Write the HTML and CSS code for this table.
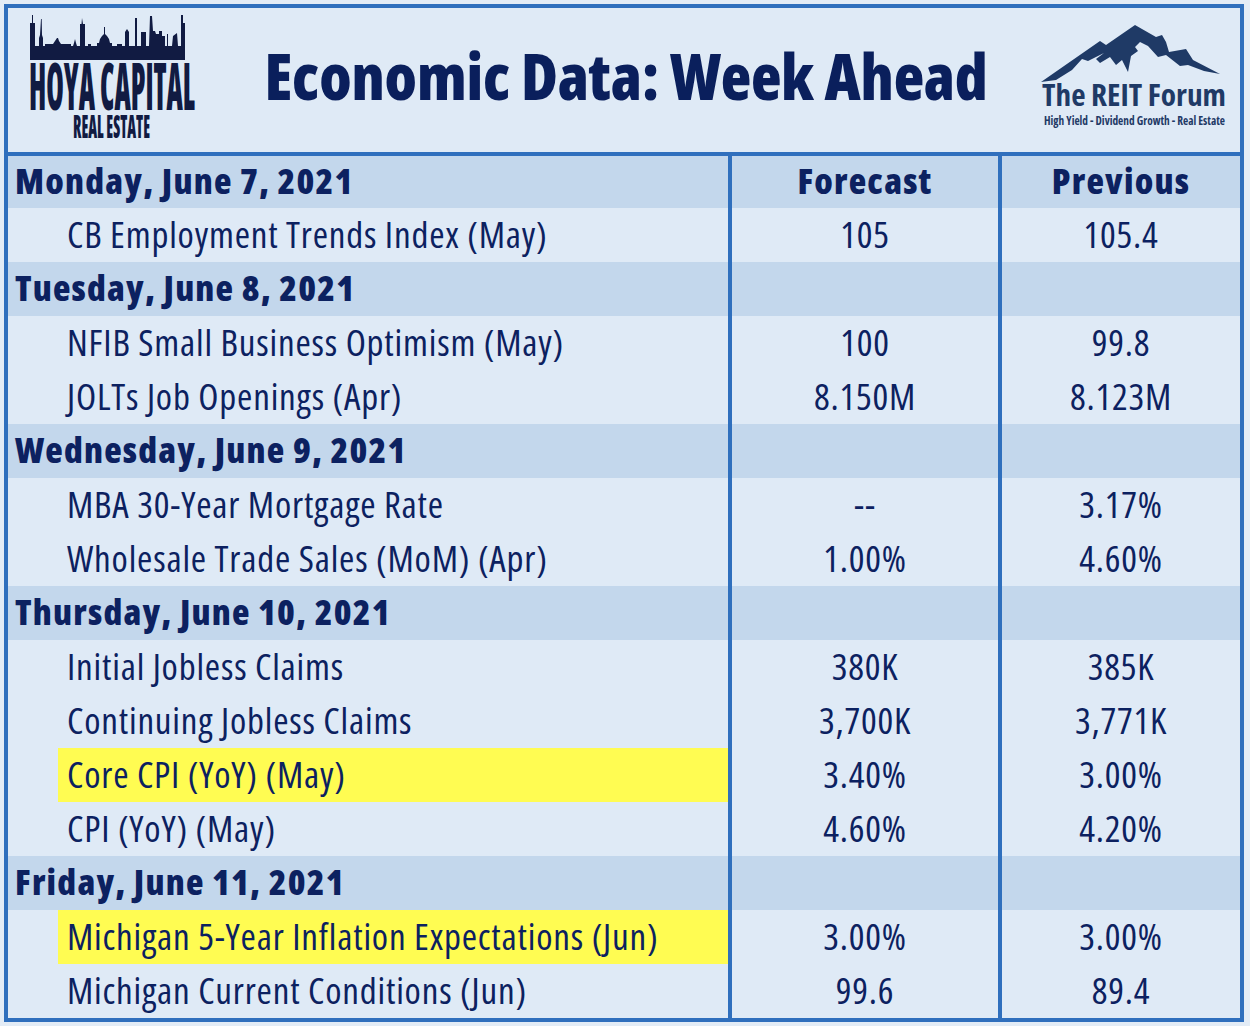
FILE: index.html
```html
<!DOCTYPE html>
<html lang="en">
<head>
<meta charset="utf-8">
<title>Economic Data: Week Ahead</title>
<link rel="stylesheet" href="styles.css">
</head>
<body>
<div class="frame">
  <header class="top">
    <div class="logo-left">
      <svg class="hoya" width="180" height="136" viewBox="0 0 180 136" aria-label="Hoya Capital Real Estate">
        <g transform="translate(5,4)" fill="#111b42">
          <path d="M5,48 L5,11 L7,11 L7,3 L8,3 L8,11 L10,11 L10,34 L14,34 L14,26 L15,23 L16,7 L16.7,7 L17,23 L18,26 L18,34 L20,34 L20,32 L28,32 L30,29 L32,26 L33,26 L34,29 L36,32 L46,32 L46,34 L48,34 L49,31 L50,27 L51,31 L52,34 L55,34 L55,12 L56.5,12 L57,6 L58,12 L60,12 L60,34 L63,34 L63,32 L66,32 L66,34 L72,34 L72,31 L74,31 L75,27 L77,24 L79,22 L79,15 L80,15 L80,22 L82,24 L84,27 L85,31 L87,31 L87,34 L92,34 L92,32 L97,32 L97,34 L100,34 L100,20 L102,17 L104,20 L104,34 L110,34 L110,6 L112,6 L112,34 L116,34 L116,20 L121,20 L121,34 L124,34 L125,4 L127,4 L128,19 L130,19 L131,22 L134,22 L134,19 L137,19 L137,24 L140,24 L140,34 L142,34 L142,22 L143,22 L143,34 L147,34 L148,24 L152,21 L153,34 L156,34 L156,3 L158,3 L158,11 L160,11 L160,48 Z"/>
          <rect x="5" y="40" width="155" height="8"/>
        </g>
        <g class="logo-text hoya-text">
          <text x="9" y="102" font-size="66" textLength="166" lengthAdjust="spacingAndGlyphs">HOYA CAPITAL</text>
          <text x="53" y="130" font-size="32" textLength="77" lengthAdjust="spacingAndGlyphs">REAL ESTATE</text>
        </g>
      </svg>
    </div>
    <h1 class="title">Economic Data: Week Ahead</h1>
    <div class="logo-right">
      <svg class="reit" width="200" height="136" viewBox="0 0 200 136" aria-label="The REIT Forum">
        <g transform="translate(3,12)" fill="#1f3a66">
          <path d="M3,62 L62,21 L68,25 L97,5 L118,17 L124,15 L128,22 L131,32 L148,29 L155,40 L182,54 L166,51 L150,45 L142,46 L128,35 L120,37 L110,26 L102,22 L97,27 L100,31 L93,36 L90,52 L84,40 L78,45 L72,37 L62,43 L58,39 L66,33 L50,41 L44,39 L34,50 L18,60 Z"/>
        </g>
        <g class="logo-text reit-text">
          <text x="7" y="98" font-size="30" textLength="184" lengthAdjust="spacingAndGlyphs">The REIT Forum</text>
          <text x="9" y="117" font-size="12" textLength="181" lengthAdjust="spacingAndGlyphs">High Yield - Dividend Growth - Real Estate</text>
        </g>
      </svg>
    </div>
  </header>

  <div class="table">
    <div class="row day first"><div class="c1">Monday, June 7, 2021</div><div class="c2">Forecast</div><div class="c3">Previous</div></div>
    <div class="row item"><div class="c1"><span>CB Employment Trends Index (May)</span></div><div class="c2">105</div><div class="c3">105.4</div></div>

    <div class="row day"><div class="c1">Tuesday, June 8, 2021</div><div class="c2"></div><div class="c3"></div></div>
    <div class="row item"><div class="c1"><span>NFIB Small Business Optimism (May)</span></div><div class="c2">100</div><div class="c3">99.8</div></div>
    <div class="row item"><div class="c1"><span>JOLTs Job Openings (Apr)</span></div><div class="c2">8.150M</div><div class="c3">8.123M</div></div>

    <div class="row day"><div class="c1">Wednesday, June 9, 2021</div><div class="c2"></div><div class="c3"></div></div>
    <div class="row item"><div class="c1"><span>MBA 30-Year Mortgage Rate</span></div><div class="c2">--</div><div class="c3">3.17%</div></div>
    <div class="row item"><div class="c1"><span>Wholesale Trade Sales (MoM) (Apr)</span></div><div class="c2">1.00%</div><div class="c3">4.60%</div></div>

    <div class="row day"><div class="c1">Thursday, June 10, 2021</div><div class="c2"></div><div class="c3"></div></div>
    <div class="row item"><div class="c1"><span>Initial Jobless Claims</span></div><div class="c2">380K</div><div class="c3">385K</div></div>
    <div class="row item"><div class="c1"><span>Continuing Jobless Claims</span></div><div class="c2">3,700K</div><div class="c3">3,771K</div></div>
    <div class="row item hl"><div class="c1"><span>Core CPI (YoY) (May)</span></div><div class="c2">3.40%</div><div class="c3">3.00%</div></div>
    <div class="row item"><div class="c1"><span>CPI (YoY) (May)</span></div><div class="c2">4.60%</div><div class="c3">4.20%</div></div>

    <div class="row day"><div class="c1">Friday, June 11, 2021</div><div class="c2"></div><div class="c3"></div></div>
    <div class="row item hl"><div class="c1"><span>Michigan 5-Year Inflation Expectations (Jun)</span></div><div class="c2">3.00%</div><div class="c3">3.00%</div></div>
    <div class="row item"><div class="c1"><span>Michigan Current Conditions (Jun)</span></div><div class="c2">99.6</div><div class="c3">89.4</div></div>
  </div>
</div>
</body>
</html>
```

FILE: styles.css
```css
* { box-sizing: border-box; }

html, body {
  margin: 0;
  padding: 0;
}

body {
  background: #e3ecf6;
  width: 1250px;
  height: 1026px;
  overflow: hidden;
  font-family: "Open Sans", "DejaVu Sans Condensed", sans-serif;
  font-stretch: 75%;
  color: #0c2160;
}

.frame {
  margin: 4px 0 0 4px;
  width: 1240px;
  border: 4px solid #2f6fbd;
  background: #dfeaf6;
}

.top {
  height: 148px;
  border-bottom: 4px solid #2f6fbd;
  display: flex;
  align-items: center;
  background: #dfeaf6;
}

.logo-left {
  width: 240px;
  flex: none;
  align-self: flex-start;
  padding-left: 12px;
}

.logo-right {
  width: 240px;
  flex: none;
  align-self: flex-start;
  padding-left: 35px;
}

.hoya, .reit { display: block; }

.logo-text {
  font-family: "Open Sans", "DejaVu Sans Condensed", sans-serif;
  font-stretch: 75%;
}

.hoya-text {
  fill: #111b42;
  font-weight: 800;
}

.reit-text {
  fill: #1f3a66;
  font-weight: 700;
}

.title {
  flex: 1;
  margin: 0 0 10px 4px;
  text-align: center;
  font-size: 63px;
  line-height: 1;
  font-weight: 800;
  letter-spacing: -0.2px;
  color: #0a1f5c;
  white-space: nowrap;
}

.table {
  display: flex;
  flex-direction: column;
}

.row {
  display: grid;
  grid-template-columns: 720px 270px 242px;
  height: 54px;
  font-size: 37px;
  line-height: 52px;
  letter-spacing: 0.8px;
}

.row.first { height: 52px; line-height: 50px; }

.c2, .c3 {
  border-left: 4px solid #2f6fbd;
  text-align: center;
  white-space: nowrap;
}

.day {
  background: #c3d7ec;
  font-weight: 800;
  font-size: 36px;
  letter-spacing: 1.2px;
}

.day .c1 {
  padding-left: 7px;
}

.item {
  background: #dfeaf6;
}

.item .c1 {
  padding-left: 50px;
}

.item .c1 span {
  display: block;
  height: 100%;
  padding-left: 9px;
  white-space: nowrap;
}

.hl .c1 span {
  background: #fffc52;
}
```
